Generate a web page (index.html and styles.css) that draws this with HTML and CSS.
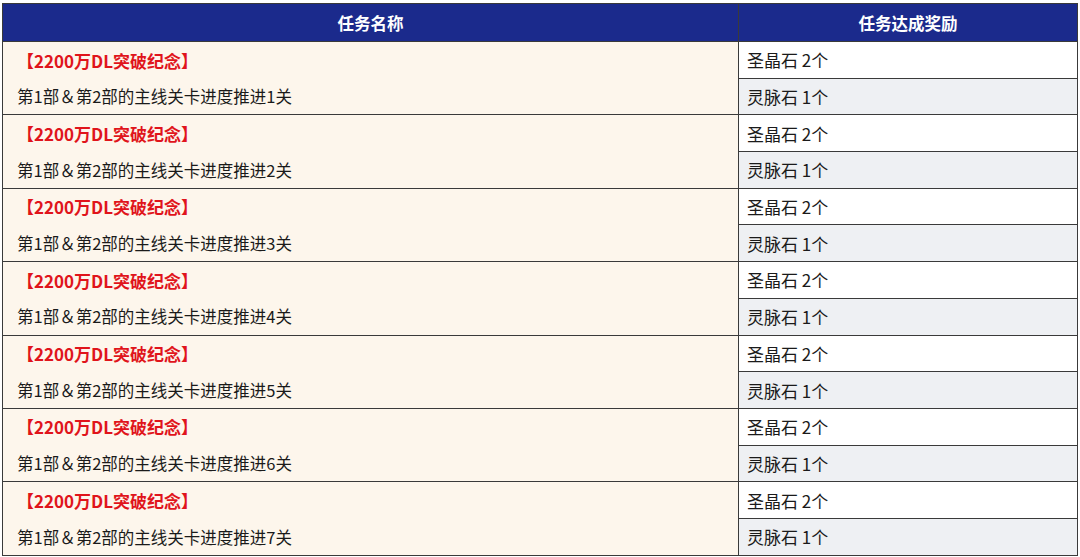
FILE: index.html
```html
<!DOCTYPE html>
<html lang="zh-CN">
<head>
<meta charset="utf-8">
<link rel="stylesheet" href="styles.css">
</head>
<body>
<table class="tbl">
  <thead>
    <tr><th class="c-task">任务名称</th><th class="c-reward">任务达成奖励</th></tr>
  </thead>
  <tbody id="rows"></tbody>
</table>
<script>
var tb = document.getElementById('rows');
var html = '';
for (var i = 1; i <= 7; i++) {
  html += '<tr><td class="task" rowspan="2"><div class="line title">【2200万DL突破纪念】</div><div class="line">第1部＆第2部的主线关卡进度推进' + i + '关</div></td><td class="rw odd">圣晶石 2个</td></tr>';
  html += '<tr><td class="rw even">灵脉石 1个</td></tr>';
}
tb.innerHTML = html;
</script>
</body>
</html>
```
FILE: styles.css
```css
html, body { margin: 0; padding: 0; background: #fff; }
body { padding: 3px 0 0 2px; font-family: "Noto Sans CJK SC", "Noto Sans", sans-serif; color: #1a1a1a; }
.tbl { border-collapse: collapse; width: 1076px; table-layout: fixed; }
.tbl th, .tbl td { border: 1px solid #3a3a3a; padding: 0; }
.tbl th { background: #1b2a8c; color: #fff; font-weight: bold; font-size: 16.5px; height: 37px; text-align: center; }
.c-task { width: 735px; }
.task { background: #fdf6ec; vertical-align: top; }
.line { height: 36.2px; display: flex; align-items: center; padding-left: 14px; font-size: 16.5px; }
.title { color: #e0141b; font-weight: bold; font-size: 17px; }
.rw { height: 35.7px; padding-left: 8px !important; font-size: 17px; }
.odd { background: #fff; }
.even { background: #eef0f3; }
```
